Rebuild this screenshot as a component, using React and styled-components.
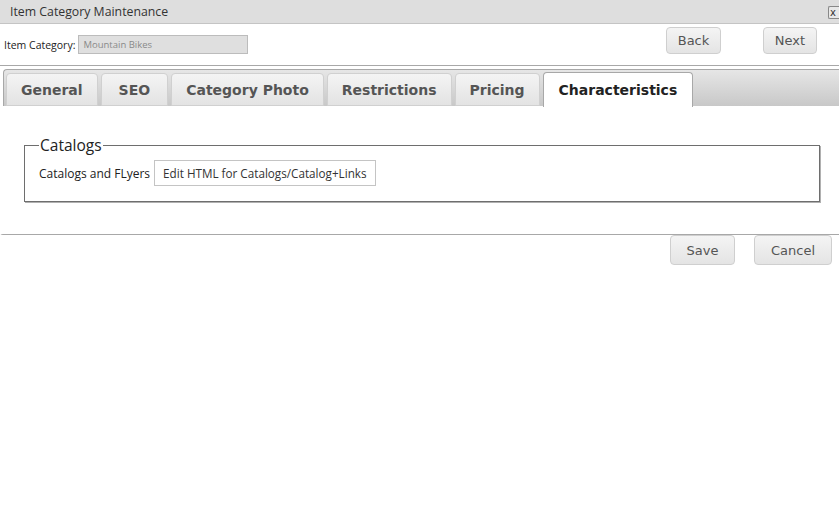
import React from "react";
import styled, { createGlobalStyle } from "styled-components";

const GlobalStyle = createGlobalStyle`
  html, body {
    margin: 0;
    padding: 0;
    background: #fff;
  }
  body {
    font-family: "Open Sans", "Noto Sans", sans-serif;
    color: #333;
  }
`;

const tabs = ["General", "SEO", "Category Photo", "Restrictions", "Pricing", "Characteristics"];

const App = () => {
  return (
    <Window>
      <GlobalStyle />
      <TitleBar>
        <Title>Item Category Maintenance</Title>
        <CloseButton>x</CloseButton>
      </TitleBar>
      <Header>
        <Field>
          <FieldLabel htmlFor="cat">Item Category:</FieldLabel>
          <FieldInput id="cat" value="Mountain Bikes" readOnly />
        </Field>
        <NavButtons>
          <GreyButton $w={55}>Back</GreyButton>
          <GreyButton $w={54}>Next</GreyButton>
        </NavButtons>
      </Header>
      <TabPanel>
        <TabStrip>
          {tabs.map((t) => (
            <Tab key={t} $active={t === "Characteristics"} $wide={t === "SEO"}>
              {t}
            </Tab>
          ))}
        </TabStrip>
        <TabBody>
          <Fieldset>
            <Legend>Catalogs</Legend>
            <Row>
              <RowLabel>Catalogs and FLyers</RowLabel>
              <EditButton>Edit HTML for Catalogs/Catalog+Links</EditButton>
            </Row>
          </Fieldset>
        </TabBody>
      </TabPanel>
      <Footer>
        <GreyButton $w={65} $h={30}>Save</GreyButton>
        <GreyButton $w={78} $h={30}>Cancel</GreyButton>
      </Footer>
    </Window>
  );
};

export default App;

const Window = styled.div`
  width: 839px;
  height: 515px;
  display: flex;
  flex-direction: column;
  background: #fff;
`;

const TitleBar = styled.div`
  height: 23px;
  background: #dedede;
  border-bottom: 1px solid #c4c4c4;
  display: flex;
  align-items: center;
  justify-content: space-between;
  padding-left: 10px;
`;

const Title = styled.span`
  font-size: 12.3px;
  color: #333;
`;

const CloseButton = styled.span`
  width: 11px;
  height: 13px;
  margin-top: 2px;
  border: 1px solid #888;
  border-right: none;
  border-radius: 2px 0 0 2px;
  background: #e8e8e8;
  font-family: "DejaVu Sans", sans-serif;
  font-size: 10px;
  line-height: 12px;
  color: #333;
  padding-left: 1px;
  box-sizing: border-box;
`;

const Header = styled.div`
  height: 41px;
  border-bottom: 1px solid #a8a8a8;
  display: flex;
  align-items: center;
  justify-content: space-between;
  padding: 0 22px 0 4px;
`;

const Field = styled.div`
  display: flex;
  align-items: center;
  gap: 3px;
`;

const FieldLabel = styled.label`
  font-size: 10.5px;
  color: #222;
`;

const FieldInput = styled.input`
  width: 170px;
  height: 19px;
  box-sizing: border-box;
  background: #dfdfdf;
  border: 1px solid #bcbcbc;
  font-family: "Open Sans", sans-serif;
  font-size: 9.5px;
  color: #8a8a8a;
  padding: 0 4px;
  outline: none;
`;

const NavButtons = styled.div`
  display: flex;
  gap: 42px;
  margin-top: -8px;
`;

const GreyButton = styled.button`
  width: ${(p) => p.$w}px;
  height: ${(p) => p.$h || 27}px;
  border: 1px solid #cfcfcf;
  border-radius: 4px;
  background: linear-gradient(#f4f4f4, #e4e4e4);
  font-family: "DejaVu Sans", Verdana, sans-serif;
  font-size: 13px;
  color: #555;
  padding: 0;
`;

const TabPanel = styled.div`
  margin-top: 3px;
  border-bottom: 1px solid #a8a8a8;
  border-bottom-left-radius: 3px;
`;

const TabStrip = styled.div`
  height: 38px;
  margin-left: 3px;
  box-sizing: border-box;
  border: 1px solid #a8a8a8;
  border-right: none;
  border-top-left-radius: 4px;
  background: linear-gradient(#e6e6e6, #c8c8c8);
  display: flex;
  align-items: flex-end;
  padding-left: 2px;
  margin-bottom: -1px;
`;

const Tab = styled.div`
  height: ${(p) => (p.$active ? 35 : 33)}px;
  box-sizing: border-box;
  margin-right: 3px;
  margin-bottom: ${(p) => (p.$active ? -1 : 0)}px;
  padding: 0 ${(p) => (p.$active ? 15 : p.$wide ? 17 : 14)}px;
  border: 1px solid ${(p) => (p.$active ? "#a8a8a8" : "#d0d0d0")};
  border-bottom: ${(p) => (p.$active ? "none" : "1px solid #d0d0d0")};
  border-radius: 4px 4px 0 0;
  background: ${(p) => (p.$active ? "#fff" : "linear-gradient(#f4f4f4, #e3e3e3)")};
  display: flex;
  align-items: center;
  font-family: "DejaVu Sans", Verdana, sans-serif;
  font-weight: bold;
  font-size: 14px;
  color: ${(p) => (p.$active ? "#222" : "#555")};
`;

const TabBody = styled.div`
  padding: 30px 19px 32px 24px;
  background: #fff;
`;

const Fieldset = styled.fieldset`
  margin: 0;
  padding: 6px 14px 15px 14px;
  border: 1px solid #6e6e6e;
  box-shadow: 1px 1px 0 #b0b0b0;
`;

const Legend = styled.legend`
  padding: 0 1px;
  font-size: 15.5px;
  color: #222;
  line-height: 18px;
`;

const Row = styled.div`
  display: flex;
  align-items: center;
  gap: 4px;
`;

const RowLabel = styled.span`
  font-size: 12px;
  color: #222;
`;

const EditButton = styled.button`
  height: 26px;
  padding: 0 8px;
  border: 1px solid #c4c4c4;
  background: #fff;
  font-family: "Open Sans", sans-serif;
  font-size: 11.7px;
  color: #333;
`;

const Footer = styled.div`
  display: flex;
  justify-content: flex-end;
  gap: 19px;
  padding: 0 7px 0 0;
`;
